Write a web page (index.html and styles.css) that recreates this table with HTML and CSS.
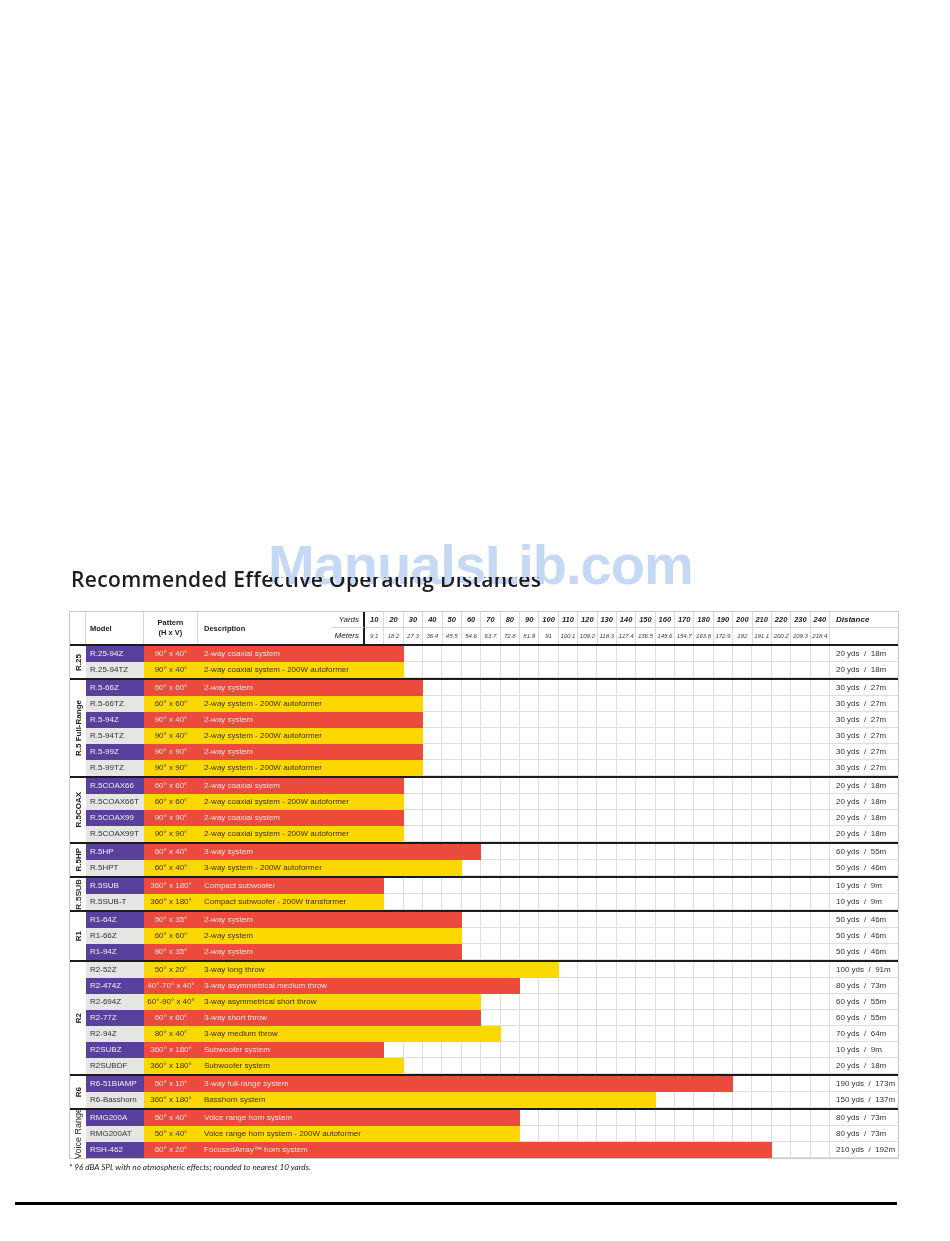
FILE: index.html
```html
<!DOCTYPE html>
<html lang="en">
<head>
<meta charset="utf-8">
<title>Recommended Effective Operating Distances</title>
<link rel="stylesheet" href="styles.css">
</head>
<body>
<div class="sheet">
  <h1 class="title">Recommended Effective Operating Distances</h1>

  <div class="table">
    <div class="thead">
      <div class="h-group"></div>
      <div class="h-model">Model</div>
      <div class="h-pat">Pattern<br>(H x V)</div>
      <div class="h-desc">Description</div>
      <div class="h-ylabel">Yards</div>
      <div class="h-y">10</div><div class="h-y">20</div><div class="h-y">30</div><div class="h-y">40</div><div class="h-y">50</div><div class="h-y">60</div><div class="h-y">70</div><div class="h-y">80</div><div class="h-y">90</div><div class="h-y">100</div><div class="h-y">110</div><div class="h-y">120</div><div class="h-y">130</div><div class="h-y">140</div><div class="h-y">150</div><div class="h-y">160</div><div class="h-y">170</div><div class="h-y">180</div><div class="h-y">190</div><div class="h-y">200</div><div class="h-y">210</div><div class="h-y">220</div><div class="h-y">230</div><div class="h-y">240</div>
      <div class="h-dist">Distance</div>
      <div class="h-mlabel">Meters</div>
      <div class="h-m">9.1</div><div class="h-m">18.2</div><div class="h-m">27.3</div><div class="h-m">36.4</div><div class="h-m">45.5</div><div class="h-m">54.6</div><div class="h-m">63.7</div><div class="h-m">72.8</div><div class="h-m">81.9</div><div class="h-m">91</div><div class="h-m">100.1</div><div class="h-m">109.2</div><div class="h-m">118.3</div><div class="h-m">127.4</div><div class="h-m">136.5</div><div class="h-m">145.6</div><div class="h-m">154.7</div><div class="h-m">163.8</div><div class="h-m">172.9</div><div class="h-m">182</div><div class="h-m">191.1</div><div class="h-m">200.2</div><div class="h-m">209.3</div><div class="h-m">218.4</div>
      <div class="h-mdist"></div>
    </div>

    <div class="group">
      <div class="glabel"><span>R.25</span></div>
      <div class="rows">
        <div class="row r"><div class="model">R.25-94Z</div><div class="track"></div><div class="bar" style="--end:7"><span class="pat">90° x 40°</span><span class="desc">2-way coaxial system</span></div><div class="dist">20 yds&nbsp; /&nbsp; 18m</div></div>
        <div class="row y"><div class="model">R.25-94TZ</div><div class="track"></div><div class="bar" style="--end:7"><span class="pat">90° x 40°</span><span class="desc">2-way coaxial system - 200W autoformer</span></div><div class="dist">20 yds&nbsp; /&nbsp; 18m</div></div>
      </div>
    </div>

    <div class="group">
      <div class="glabel"><span>R.5 Full-Range</span></div>
      <div class="rows">
        <div class="row r"><div class="model">R.5-66Z</div><div class="track"></div><div class="bar" style="--end:8"><span class="pat">60° x 60°</span><span class="desc">2-way system</span></div><div class="dist">30 yds&nbsp; /&nbsp; 27m</div></div>
        <div class="row y"><div class="model">R.5-66TZ</div><div class="track"></div><div class="bar" style="--end:8"><span class="pat">60° x 60°</span><span class="desc">2-way system - 200W autoformer</span></div><div class="dist">30 yds&nbsp; /&nbsp; 27m</div></div>
        <div class="row r"><div class="model">R.5-94Z</div><div class="track"></div><div class="bar" style="--end:8"><span class="pat">90° x 40°</span><span class="desc">2-way system</span></div><div class="dist">30 yds&nbsp; /&nbsp; 27m</div></div>
        <div class="row y"><div class="model">R.5-94TZ</div><div class="track"></div><div class="bar" style="--end:8"><span class="pat">90° x 40°</span><span class="desc">2-way system - 200W autoformer</span></div><div class="dist">30 yds&nbsp; /&nbsp; 27m</div></div>
        <div class="row r"><div class="model">R.5-99Z</div><div class="track"></div><div class="bar" style="--end:8"><span class="pat">90° x 90°</span><span class="desc">2-way system</span></div><div class="dist">30 yds&nbsp; /&nbsp; 27m</div></div>
        <div class="row y"><div class="model">R.5-99TZ</div><div class="track"></div><div class="bar" style="--end:8"><span class="pat">90° x 90°</span><span class="desc">2-way system - 200W autoformer</span></div><div class="dist">30 yds&nbsp; /&nbsp; 27m</div></div>
      </div>
    </div>

    <div class="group">
      <div class="glabel"><span>R.5COAX</span></div>
      <div class="rows">
        <div class="row r"><div class="model">R.5COAX66</div><div class="track"></div><div class="bar" style="--end:7"><span class="pat">60° x 60°</span><span class="desc">2-way coaxial system</span></div><div class="dist">20 yds&nbsp; /&nbsp; 18m</div></div>
        <div class="row y"><div class="model">R.5COAX66T</div><div class="track"></div><div class="bar" style="--end:7"><span class="pat">60° x 60°</span><span class="desc">2-way coaxial system - 200W autoformer</span></div><div class="dist">20 yds&nbsp; /&nbsp; 18m</div></div>
        <div class="row r"><div class="model">R.5COAX99</div><div class="track"></div><div class="bar" style="--end:7"><span class="pat">90° x 90°</span><span class="desc">2-way coaxial system</span></div><div class="dist">20 yds&nbsp; /&nbsp; 18m</div></div>
        <div class="row y"><div class="model">R.5COAX99T</div><div class="track"></div><div class="bar" style="--end:7"><span class="pat">90° x 90°</span><span class="desc">2-way coaxial system - 200W autoformer</span></div><div class="dist">20 yds&nbsp; /&nbsp; 18m</div></div>
      </div>
    </div>

    <div class="group">
      <div class="glabel"><span>R.5HP</span></div>
      <div class="rows">
        <div class="row r"><div class="model">R.5HP</div><div class="track"></div><div class="bar" style="--end:11"><span class="pat">60° x 40°</span><span class="desc">3-way system</span></div><div class="dist">60 yds&nbsp; /&nbsp; 55m</div></div>
        <div class="row y"><div class="model">R.5HPT</div><div class="track"></div><div class="bar" style="--end:10"><span class="pat">60° x 40°</span><span class="desc">3-way system - 200W autoformer</span></div><div class="dist">50 yds&nbsp; /&nbsp; 46m</div></div>
      </div>
    </div>

    <div class="group">
      <div class="glabel"><span class="thin">R.5SUB</span></div>
      <div class="rows">
        <div class="row r"><div class="model">R.5SUB</div><div class="track"></div><div class="bar" style="--end:6"><span class="pat">360° x 180°</span><span class="desc">Compact subwoofer</span></div><div class="dist">10 yds&nbsp; /&nbsp; 9m</div></div>
        <div class="row y"><div class="model">R.5SUB-T</div><div class="track"></div><div class="bar" style="--end:6"><span class="pat">360° x 180°</span><span class="desc">Compact subwoofer - 200W transformer</span></div><div class="dist">10 yds&nbsp; /&nbsp; 9m</div></div>
      </div>
    </div>

    <div class="group">
      <div class="glabel"><span>R1</span></div>
      <div class="rows">
        <div class="row r"><div class="model">R1-64Z</div><div class="track"></div><div class="bar" style="--end:10"><span class="pat">50° x 35°</span><span class="desc">2-way system</span></div><div class="dist">50 yds&nbsp; /&nbsp; 46m</div></div>
        <div class="row y"><div class="model">R1-66Z</div><div class="track"></div><div class="bar" style="--end:10"><span class="pat">60° x 60°</span><span class="desc">2-way system</span></div><div class="dist">50 yds&nbsp; /&nbsp; 46m</div></div>
        <div class="row r"><div class="model">R1-94Z</div><div class="track"></div><div class="bar" style="--end:10"><span class="pat">80° x 35°</span><span class="desc">2-way system</span></div><div class="dist">50 yds&nbsp; /&nbsp; 46m</div></div>
      </div>
    </div>

    <div class="group">
      <div class="glabel"><span>R2</span></div>
      <div class="rows">
        <div class="row y"><div class="model">R2-52Z</div><div class="track"></div><div class="bar" style="--end:15"><span class="pat">50° x 20°</span><span class="desc">3-way long throw</span></div><div class="dist">100 yds&nbsp; /&nbsp; 91m</div></div>
        <div class="row r"><div class="model">R2-474Z</div><div class="track"></div><div class="bar" style="--end:13"><span class="pat">40°-70° x 40°</span><span class="desc">3-way asymmetrical medium throw</span></div><div class="dist">80 yds&nbsp; /&nbsp; 73m</div></div>
        <div class="row y"><div class="model">R2-694Z</div><div class="track"></div><div class="bar" style="--end:11"><span class="pat">60°-90° x 40°</span><span class="desc">3-way asymmetrical short throw</span></div><div class="dist">60 yds&nbsp; /&nbsp; 55m</div></div>
        <div class="row r"><div class="model">R2-77Z</div><div class="track"></div><div class="bar" style="--end:11"><span class="pat">60° x 60°</span><span class="desc">3-way short throw</span></div><div class="dist">60 yds&nbsp; /&nbsp; 55m</div></div>
        <div class="row y"><div class="model">R2-94Z</div><div class="track"></div><div class="bar" style="--end:12"><span class="pat">80° x 40°</span><span class="desc">3-way medium throw</span></div><div class="dist">70 yds&nbsp; /&nbsp; 64m</div></div>
        <div class="row r"><div class="model">R2SUBZ</div><div class="track"></div><div class="bar" style="--end:6"><span class="pat">360° x 180°</span><span class="desc">Subwoofer system</span></div><div class="dist">10 yds&nbsp; /&nbsp; 9m</div></div>
        <div class="row y"><div class="model">R2SUBDF</div><div class="track"></div><div class="bar" style="--end:7"><span class="pat">360° x 180°</span><span class="desc">Subwoofer system</span></div><div class="dist">20 yds&nbsp; /&nbsp; 18m</div></div>
      </div>
    </div>

    <div class="group">
      <div class="glabel"><span>R6</span></div>
      <div class="rows">
        <div class="row r"><div class="model">R6-51BIAMP</div><div class="track"></div><div class="bar" style="--end:24"><span class="pat">50° x 10°</span><span class="desc">3-way full-range system</span></div><div class="dist">190 yds&nbsp; /&nbsp; 173m</div></div>
        <div class="row y"><div class="model">R6-Basshorn</div><div class="track"></div><div class="bar" style="--end:20"><span class="pat">360° x 180°</span><span class="desc">Basshorn system</span></div><div class="dist">150 yds&nbsp; /&nbsp; 137m</div></div>
      </div>
    </div>

    <div class="group">
      <div class="glabel"><span class="voice">Voice Range</span></div>
      <div class="rows">
        <div class="row r"><div class="model">RMG200A</div><div class="track"></div><div class="bar" style="--end:13"><span class="pat">50° x 40°</span><span class="desc">Voice range horn system</span></div><div class="dist">80 yds&nbsp; /&nbsp; 73m</div></div>
        <div class="row y"><div class="model">RMG200AT</div><div class="track"></div><div class="bar" style="--end:13"><span class="pat">50° x 40°</span><span class="desc">Voice range horn system - 200W autoformer</span></div><div class="dist">80 yds&nbsp; /&nbsp; 73m</div></div>
        <div class="row r"><div class="model">RSH-462</div><div class="track"></div><div class="bar" style="--end:26"><span class="pat">60° x 20°</span><span class="desc">FocusedArray™ horn system</span></div><div class="dist">210 yds&nbsp; /&nbsp; 192m</div></div>
      </div>
    </div>
  </div>

  <p class="footnote">* 96 dBA SPL with no atmospheric effects; rounded to nearest 10 yards.</p>

  <div class="rule"></div>
</div>

<div class="wm-mask"></div>
<div class="wm">ManualsLib.com</div>
</body>
</html>
```

FILE: styles.css
```css
* { box-sizing: border-box; }

html, body {
  margin: 0;
  padding: 0;
  background: #fff;
}

body {
  font-family: "Liberation Sans", Arial, sans-serif;
  color: #333;
  position: relative;
  width: 950px;
  height: 1241px;
  overflow: hidden;
}

.sheet {
  padding-top: 567px;
}

.title {
  margin: 0 0 0 71px;
  font-family: "Open Sans", "Liberation Sans", sans-serif;
  font-weight: 600;
  font-size: 21px;
  line-height: 24px;
  color: #1d1d1d;
  letter-spacing: 0.35px;
}

/* ---------- table ---------- */
.table {
  margin: 20px 0 0 69px;
  width: 830px;
  border: 1px solid #c9c9c9;
  font-size: 8px;
}

.thead {
  display: grid;
  grid-template-columns: 16px 58px 54px 133px 34px repeat(24, 1fr) 68px;
  grid-template-rows: 16px 16px;
  border-bottom: 2px solid #1c1c1c;
  color: #222;
}

.h-group, .h-model, .h-pat, .h-desc {
  grid-row: span 2;
  display: flex;
  align-items: center;
}

.h-group { border-right: 1px solid #d4d4d4; }

.h-model {
  border-right: 1px solid #d4d4d4;
  padding-left: 4px;
  font-weight: bold;
  font-size: 7.5px;
}

.h-pat {
  border-right: 1px solid #d4d4d4;
  justify-content: center;
  text-align: center;
  font-weight: bold;
  font-size: 7.5px;
  line-height: 10px;
}

.h-desc {
  padding-left: 6px;
  font-weight: bold;
  font-size: 7.5px;
}

.h-ylabel, .h-mlabel {
  border-right: 2px solid #1c1c1c;
  text-align: right;
  padding-right: 4px;
  font-style: italic;
  font-size: 8px;
  line-height: 15px;
}

.h-ylabel { border-bottom: 1px solid #d4d4d4; }

.h-y, .h-m {
  border-right: 1px solid #dcdcdc;
  text-align: center;
  font-style: italic;
  white-space: nowrap;
  overflow: hidden;
}

.h-y {
  border-bottom: 1px solid #d4d4d4;
  font-weight: bold;
  font-size: 7.5px;
  line-height: 15px;
}

.h-m {
  font-size: 6.2px;
  line-height: 16px;
  color: #444;
  letter-spacing: -0.1px;
}

.h-dist {
  border-bottom: 1px solid #d4d4d4;
  padding-left: 6px;
  font-weight: bold;
  font-style: italic;
  font-size: 8px;
  line-height: 15px;
}

/* ---------- body ---------- */
.group {
  display: flex;
}

.group + .group {
  border-top: 2px solid #1c1c1c;
}

.glabel {
  width: 16px;
  flex: none;
  contain: size;
  display: flex;
  align-items: center;
  justify-content: center;
}

.glabel span {
  writing-mode: vertical-rl;
  transform: rotate(180deg);
  white-space: nowrap;
  font-weight: bold;
  font-size: 8px;
  color: #222;
}

.glabel span.thin {
  font-weight: normal;
  letter-spacing: 0.3px;
  color: #1a1a1a;
  -webkit-text-stroke: 0.2px #1a1a1a;
}

.glabel span.voice {
  font-weight: normal;
  font-size: 9px;
  color: #2a2a2a;
}

.rows {
  flex: 1;
  min-width: 0;
}

.row {
  display: grid;
  grid-template-columns: 58px 54px 133px 34px repeat(24, 1fr) 68px;
  height: 16px;
  line-height: 16px;
  font-size: 8px;
}

.model {
  grid-column: 1;
  grid-row: 1;
  padding-left: 4px;
  white-space: nowrap;
}

.track {
  grid-column: 5 / 29;
  grid-row: 1;
  background-image:
    linear-gradient(to top, #dedede 1px, transparent 1px),
    repeating-linear-gradient(to right, transparent 0, transparent 18.375px, #dedede 18.375px, #dedede 19.375px);
}

.bar {
  grid-column: 2 / var(--end);
  grid-row: 1;
  display: flex;
  white-space: nowrap;
  overflow: hidden;
}

.pat {
  width: 54px;
  flex: none;
  text-align: center;
}

.desc {
  padding-left: 6px;
}

.dist {
  grid-column: 29;
  grid-row: 1;
  padding-left: 6px;
  white-space: nowrap;
  color: #333;
  background-image: linear-gradient(to top, #dedede 1px, transparent 1px);
}

.r .model { background: #58409c; color: #f2eef9; }
.y .model { background: #e5e5e5; color: #333; }
.r .bar { background: #ec4a3d; color: #fde3dc; }
.y .bar { background: #fdd800; color: #3b3100; }

/* ---------- footer ---------- */
.footnote {
  margin: 3px 0 0 69px;
  font-family: "Lato", "Open Sans", sans-serif;
  font-style: italic;
  font-size: 8.2px;
  line-height: 10px;
  color: #222;
}

.rule {
  margin: 30px 0 0 15px;
  width: 882px;
  height: 3px;
  background: #000;
}

/* ---------- watermark overlay ---------- */
.wm-mask {
  position: absolute;
  left: 268px;
  top: 537px;
  width: 432px;
  height: 40px;
  background: #fff;
}

.wm {
  position: absolute;
  left: 268px;
  top: 537px;
  font-family: "Liberation Sans", Arial, sans-serif;
  font-weight: bold;
  font-size: 56px;
  line-height: 56px;
  letter-spacing: -1px;
  color: #c5d9f5;
  mix-blend-mode: multiply;
  white-space: nowrap;
}
```
